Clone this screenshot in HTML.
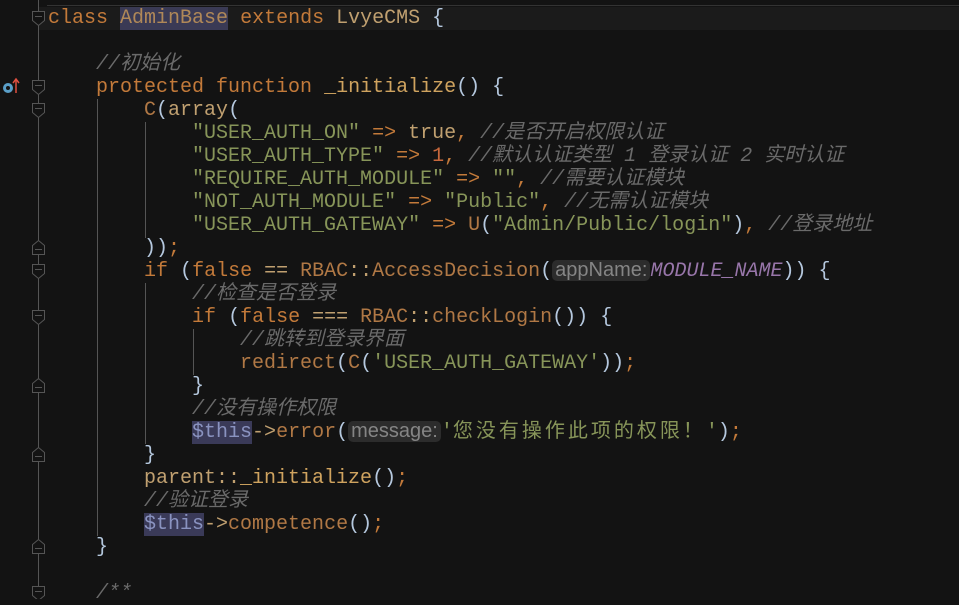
<!DOCTYPE html>
<html><head><meta charset="utf-8"><style>
html,body{margin:0;padding:0;background:#131313;width:959px;height:599px;overflow:hidden}
#c{position:absolute;left:48px;top:7px;font-family:"Liberation Mono","Noto Sans CJK SC",monospace;font-size:20px;line-height:23px;color:#c0a070}
.l{height:23px;white-space:pre}
.k{color:#c37a3a}.s{color:#879559}.cm{color:#6a6a6a;font-style:italic}.f{color:#cfa35f}.p{color:#b5c8de}
.n{color:#c8683c}.cn{color:#9876aa;font-style:italic}.v{color:#8a93c0;background:#3a3a58}
.cl{color:#b08858;background:#3a3a55}.fn{color:#b07845}
i.z{font-style:inherit;letter-spacing:0}
i.w{font-style:inherit;letter-spacing:3px}
.h{display:inline-block;font-family:"Liberation Sans","Noto Sans CJK SC",sans-serif;font-size:20px;line-height:21px;color:#858585;background:#2c2c2c;border-radius:5px;padding:0 3px;vertical-align:0px;font-style:normal}
.cur{position:absolute;left:39px;top:7px;width:920px;height:23px;background:#1b1b1b}
.top{position:absolute;left:47px;top:5px;width:912px;height:1px;background:#333}
</style></head><body>
<div class="cur"></div><div class="top"></div>
<svg width="959" height="599" style="position:absolute;left:0;top:0">
<g stroke="#555" fill="#131313" stroke-width="1">
<line x1="38.5" y1="0" x2="38.5" y2="599"/>
<line x1="97.5" y1="99" x2="97.5" y2="536"/>
<line x1="145.5" y1="283" x2="145.5" y2="444"/>
<line x1="193.5" y1="329" x2="193.5" y2="375"/>
<line x1="145.5" y1="122" x2="145.5" y2="238"/>
<g transform="translate(0,18)"><path d="M32.5 -6.5h12v9l-6 5l-6-5z"/><line x1="35" y1="-1.5" x2="42" y2="-1.5"/></g>
<g transform="translate(0,87)"><path d="M32.5 -6.5h12v9l-6 5l-6-5z"/><line x1="35" y1="-1.5" x2="42" y2="-1.5"/></g>
<g transform="translate(0,110)"><path d="M32.5 -6.5h12v9l-6 5l-6-5z"/><line x1="35" y1="-1.5" x2="42" y2="-1.5"/></g>
<g transform="translate(0,271)"><path d="M32.5 -6.5h12v9l-6 5l-6-5z"/><line x1="35" y1="-1.5" x2="42" y2="-1.5"/></g>
<g transform="translate(0,317)"><path d="M32.5 -6.5h12v9l-6 5l-6-5z"/><line x1="35" y1="-1.5" x2="42" y2="-1.5"/></g>
<g transform="translate(0,593)"><path d="M32.5 -6.5h12v9l-6 5l-6-5z"/><line x1="35" y1="-1.5" x2="42" y2="-1.5"/></g>
<g transform="translate(0,248)"><path d="M32.5 6.5h12v-9l-6-5l-6 5z"/><line x1="35" y1="1.5" x2="42" y2="1.5"/></g>
<g transform="translate(0,386)"><path d="M32.5 6.5h12v-9l-6-5l-6 5z"/><line x1="35" y1="1.5" x2="42" y2="1.5"/></g>
<g transform="translate(0,455)"><path d="M32.5 6.5h12v-9l-6-5l-6 5z"/><line x1="35" y1="1.5" x2="42" y2="1.5"/></g>
<g transform="translate(0,547)"><path d="M32.5 6.5h12v-9l-6-5l-6 5z"/><line x1="35" y1="1.5" x2="42" y2="1.5"/></g>
</g>
<circle cx="8" cy="88" r="5" fill="#5a9fc8"/><circle cx="8" cy="88" r="2" fill="#131313"/>
<line x1="16" y1="93" x2="16" y2="80" stroke="#e05040" stroke-width="1.5"/><path d="M13 83l3-4l3 4" stroke="#e05040" fill="none" stroke-width="1.5"/>
</svg>
<div id="c"><div class="l"><span class="k">class</span> <span class="cl">AdminBase</span> <span class="k">extends</span> LvyeCMS <span class="p">{</span></div><div class="l"></div><div class="l">    <span class="cm">//<i class="z">初始化</i></span></div><div class="l">    <span class="k">protected function</span> <span class="f">_initialize</span><span class="p">()</span> <span class="p">{</span></div><div class="l">        <span class="fn">C</span><span class="p">(</span>array<span class="p">(</span></div><div class="l">            <span class="s">"USER_AUTH_ON"</span> <span class="k">=&gt;</span> true<span class="k">,</span> <span class="cm">//<i class="z">是否开启权限认证</i></span></div><div class="l">            <span class="s">"USER_AUTH_TYPE"</span> <span class="k">=&gt;</span> <span class="n">1</span><span class="k">,</span> <span class="cm">//<i class="z">默认认证类型</i> 1 <i class="z">登录认证</i> 2 <i class="z">实时认证</i></span></div><div class="l">            <span class="s">"REQUIRE_AUTH_MODULE"</span> <span class="k">=&gt;</span> <span class="s">""</span><span class="k">,</span> <span class="cm">//<i class="z">需要认证模块</i></span></div><div class="l">            <span class="s">"NOT_AUTH_MODULE"</span> <span class="k">=&gt;</span> <span class="s">"Public"</span><span class="k">,</span> <span class="cm">//<i class="z">无需认证模块</i></span></div><div class="l">            <span class="s">"USER_AUTH_GATEWAY"</span> <span class="k">=&gt;</span> <span class="fn">U</span><span class="p">(</span><span class="s">"Admin/Public/login"</span><span class="p">)</span><span class="k">,</span> <span class="cm">//<i class="z">登录地址</i></span></div><div class="l">        <span class="p">))</span><span class="k">;</span></div><div class="l">        <span class="k">if</span> <span class="p">(</span><span class="k">false</span> == <span class="fn">RBAC</span>::<span class="fn">AccessDecision</span><span class="p">(</span><span class="h">appName:</span><span class="cn">MODULE_NAME</span><span class="p">))</span> <span class="p">{</span></div><div class="l">            <span class="cm">//<i class="z">检查是否登录</i></span></div><div class="l">            <span class="k">if</span> <span class="p">(</span><span class="k">false</span> === <span class="fn">RBAC</span>::<span class="fn">checkLogin</span><span class="p">())</span> <span class="p">{</span></div><div class="l">                <span class="cm">//<i class="z">跳转到登录界面</i></span></div><div class="l">                <span class="fn">redirect</span><span class="p">(</span><span class="fn">C</span><span class="p">(</span><span class="s">'USER_AUTH_GATEWAY'</span><span class="p">))</span><span class="k">;</span></div><div class="l">            <span class="p">}</span></div><div class="l">            <span class="cm">//<i class="z">没有操作权限</i></span></div><div class="l">            <span class="v">$this</span>-&gt;<span class="fn">error</span><span class="p">(</span><span class="h">message:</span><span class="s">'<i class="w">您没有操作此项的权限！</i>'</span><span class="p">)</span><span class="k">;</span></div><div class="l">        <span class="p">}</span></div><div class="l">        parent::<span class="f">_initialize</span><span class="p">()</span><span class="k">;</span></div><div class="l">        <span class="cm">//<i class="z">验证登录</i></span></div><div class="l">        <span class="v">$this</span>-&gt;<span class="fn">competence</span><span class="p">()</span><span class="k">;</span></div><div class="l">    <span class="p">}</span></div><div class="l"></div><div class="l">    <span class="cm">/**</span></div></div>
</body></html>
